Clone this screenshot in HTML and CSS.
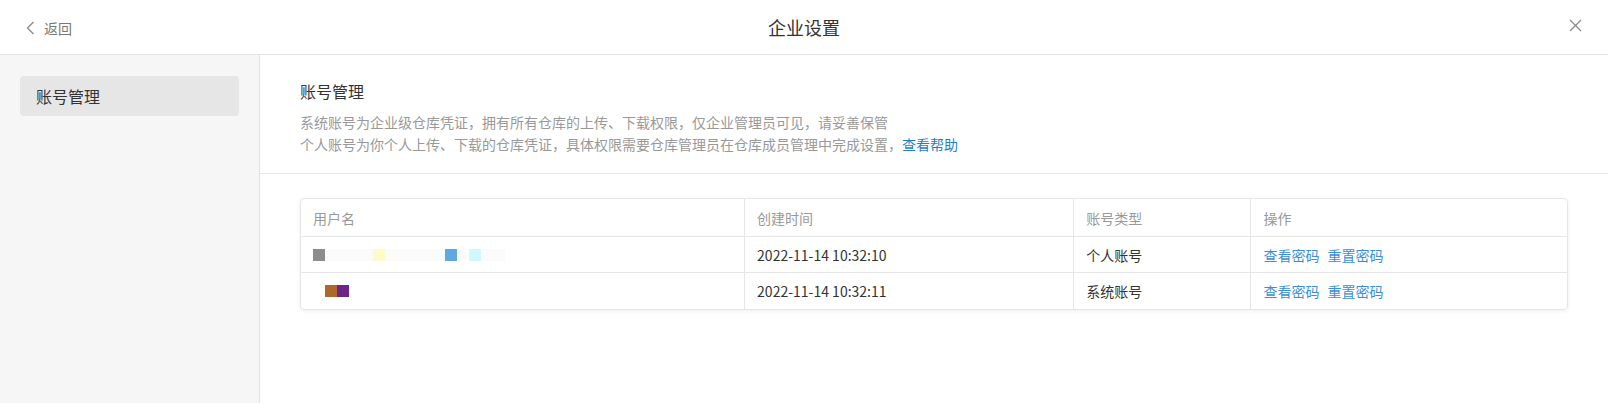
FILE: index.html
```html
<!DOCTYPE html>
<html lang="zh-CN">
<head>
<meta charset="utf-8">
<title>企业设置</title>
<link rel="stylesheet" href="styles.css">
</head>
<body>
<div class="page">
  <header class="topbar">
    <a class="back">
      <svg class="back-icon" width="9" height="14" viewBox="0 0 9 14"><polyline points="7.5,1 1.5,7 7.5,13" fill="none" stroke="#8a8a8a" stroke-width="1.3"/></svg>
      <span>返回</span>
    </a>
    <div class="title">企业设置</div>
    <a class="close">
      <svg width="13" height="13" viewBox="0 0 13 13"><path d="M1 1L12 12M12 1L1 12" stroke="#8a8a8a" stroke-width="1.3" fill="none"/></svg>
    </a>
  </header>
  <div class="body">
    <aside class="sidebar">
      <div class="side-item active">账号管理</div>
    </aside>
    <main class="main">
      <section class="intro">
        <h2 class="heading">账号管理</h2>
        <p class="desc">系统账号为企业级仓库凭证，拥有所有仓库的上传、下载权限，仅企业管理员可见，请妥善保管</p>
        <p class="desc">个人账号为你个人上传、下载的仓库凭证，具体权限需要仓库管理员在仓库成员管理中完成设置，<a class="help">查看帮助</a></p>
      </section>
      <section class="table-wrap">
        <div class="table">
          <div class="row head">
            <div class="cell c1">用户名</div>
            <div class="cell c2">创建时间</div>
            <div class="cell c3">账号类型</div>
            <div class="cell c4">操作</div>
          </div>
          <div class="row">
            <div class="cell c1">
              <span class="name">
                <i class="sq" style="background:#8c8c8c"></i><i class="sq faint"></i><i class="sq faint"></i><i class="sq faint"></i><i class="sq faint"></i><i class="sq" style="background:#fdfbc8"></i><i class="sq faint"></i><i class="sq faint"></i><i class="sq faint"></i><i class="sq faint"></i><i class="sq faint"></i><i class="sq" style="background:#5ea9e4"></i><i class="sq faint"></i><i class="sq" style="background:#cff9fd"></i><i class="sq faint"></i><i class="sq faint"></i>
              </span>
            </div>
            <div class="cell c2">2022-11-14 10:32:10</div>
            <div class="cell c3">个人账号</div>
            <div class="cell c4"><a class="op">查看密码</a><a class="op">重置密码</a></div>
          </div>
          <div class="row">
            <div class="cell c1">
              <span class="name indent">
                <i class="sq" style="background:#b0672c"></i><i class="sq" style="background:#6a2789"></i>
              </span>
            </div>
            <div class="cell c2">2022-11-14 10:32:11</div>
            <div class="cell c3">系统账号</div>
            <div class="cell c4"><a class="op">查看密码</a><a class="op">重置密码</a></div>
          </div>
        </div>
      </section>
    </main>
  </div>
</div>
</body>
</html>
```

FILE: styles.css
```css
* { box-sizing: border-box; }
html, body {
  margin: 0;
  padding: 0;
  height: 100%;
  background: #fff;
  font-family: "Noto Sans CJK SC", "Noto Sans", sans-serif;
  color: #333;
}
.page {
  display: flex;
  flex-direction: column;
  height: 403px;
}
.topbar {
  height: 55px;
  flex: none;
  border-bottom: 1px solid #e4e4e4;
  display: flex;
  align-items: center;
  position: relative;
  padding: 0 26px 0 26px;
}
.back {
  display: flex;
  align-items: center;
  gap: 9px;
  color: #777;
  font-size: 14px;
  line-height: 20px;
  margin-top: 2px;
}
.back-icon { display: block; }
.title {
  position: absolute;
  left: 0;
  right: 0;
  top: 0;
  height: 54px;
  display: flex;
  align-items: center;
  justify-content: center;
  font-size: 18px;
  color: #333;
  pointer-events: none;
}
.close {
  margin-left: auto;
  display: flex;
  margin-top: -3px;
  margin-right: 0;
}
.body {
  flex: 1;
  display: flex;
  min-height: 0;
}
.sidebar {
  width: 260px;
  flex: none;
  background: #f6f6f6;
  border-right: 1px solid #e2e2e2;
  padding: 21px 20px;
}
.side-item {
  height: 40px;
  border-radius: 4px;
  padding-left: 16px;
  display: flex;
  align-items: center;
  font-size: 16px;
  color: #333;
}
.side-item.active { background: #e6e6e6; }
.main {
  flex: 1;
  min-width: 0;
}
.intro {
  padding: 24px 40px 18px;
  border-bottom: 1px solid #e6e6e6;
}
.heading {
  margin: 0 0 8px;
  font-size: 16px;
  font-weight: normal;
  line-height: 24px;
  color: #333;
}
.desc {
  margin: 0;
  font-size: 14px;
  line-height: 22px;
  color: #999;
}
.help {
  color: #1f7fc6;
  margin-left: 0;
}
.table-wrap {
  padding: 24px 40px 0 40px;
}
.table {
  border: 1px solid #e6e6e6;
  border-radius: 4px;
  box-shadow: 0 1px 4px rgba(0,0,0,0.07);
  font-size: 14px;
}
.row {
  display: flex;
  height: 36px;
  border-bottom: 1px solid #e6e6e6;
}
.row:last-child { border-bottom: none; }
.row.head {
  height: 38px;
  color: #999;
}
.cell {
  display: flex;
  align-items: center;
  padding-left: 12px;
  border-left: 1px solid #e6e6e6;
  white-space: nowrap;
}
.cell.c1 { width: 35%; border-left: none; }
.cell.c2 { width: 26%; }
.cell.c3 { width: 14%; }
.cell.c4 { flex: 1; }
.row:not(.head) .cell { color: #333; }
.name { display: flex; }
.name.indent { padding-left: 12px; }
.sq {
  display: block;
  width: 12px;
  height: 12px;
}
.sq.faint { background: #fbfbfb; }
.op {
  color: #3a8fd8;
  margin-right: 8px;
}
```
